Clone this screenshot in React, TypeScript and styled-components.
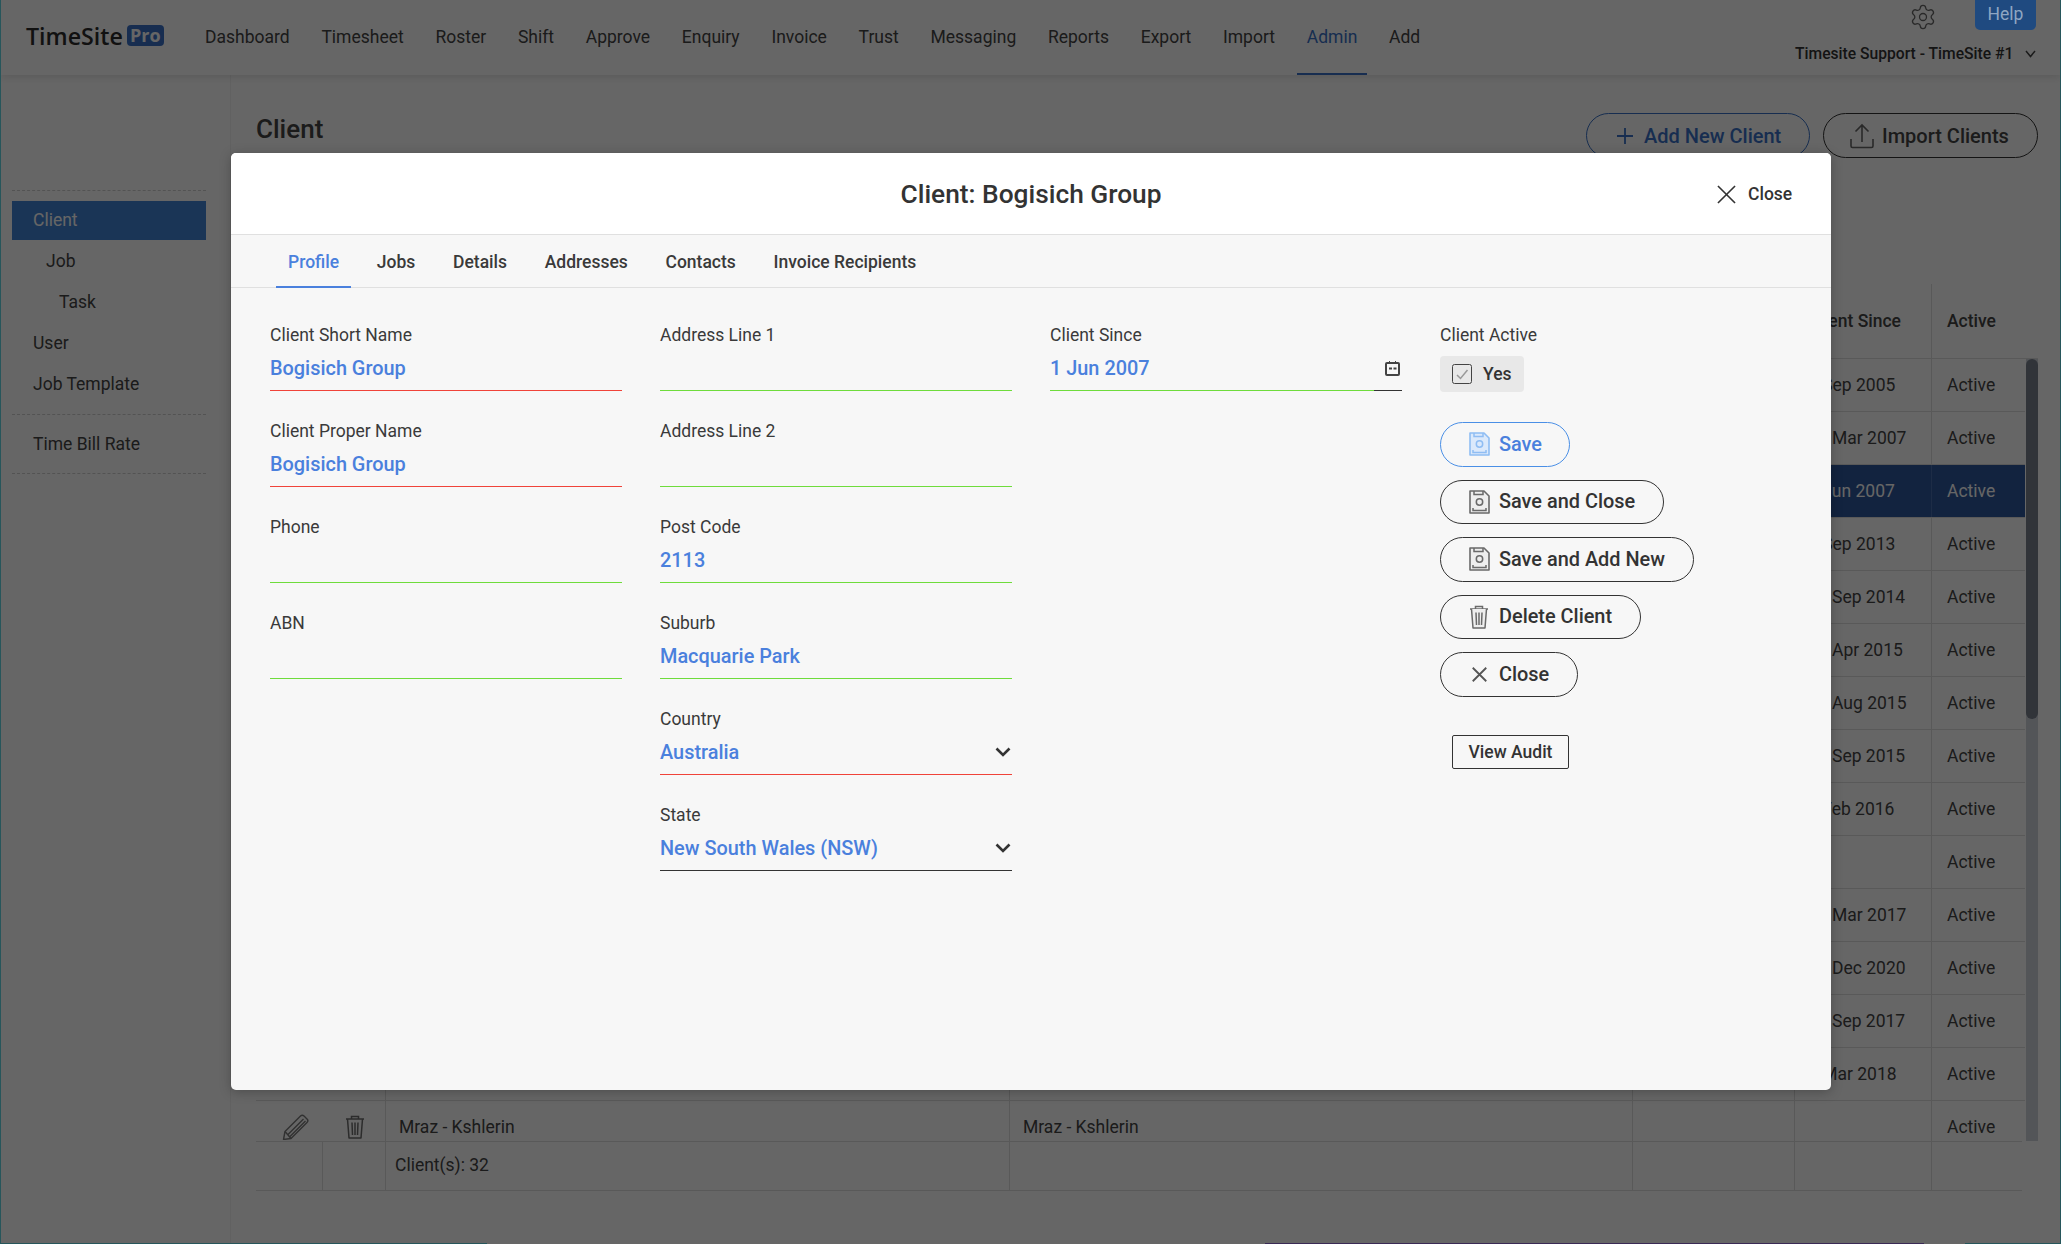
import styled, { createGlobalStyle } from 'styled-components'
import { Settings } from 'lucide-react'

const GlobalStyle = createGlobalStyle`
  html, body {
    margin: 0;
    padding: 0;
    height: 100%;
    overflow: hidden;
    font-family: Roboto, "Liberation Sans", sans-serif;
  }
  * {
    box-sizing: border-box;
  }
`

const Frame = styled.div`
  width: 2061px;
  height: 1244px;
  padding: 0 1px 1px;
  background: linear-gradient(90deg, #27565b 0 487px, #666 487px 1265px, #3a2a55 1265px 1924px, #666 1924px 1965px, #27565b 1965px);
`

const Page = styled.div`
  position: relative;
  height: 100%;
  display: flex;
  flex-direction: column;
  background: #fff;
  color: #444;
  overflow: hidden;
`

const TopBar = styled.header`
  height: 75px;
  flex: none;
  display: flex;
  align-items: stretch;
  padding-left: 25px;
  background: #fff;
  box-shadow: 0 2px 8px rgba(0, 0, 0, 0.12);
  position: relative;
`

const Logo = styled.div`
  display: flex;
  align-items: center;
  height: 71px;
  width: 169px;
  flex: none;
  color: #2c2c2c;
  font: 600 23.2px "Open Sans", sans-serif;
`

const ProBadge = styled.span`
  display: inline-block;
  margin-left: 4px;
  width: 37px;
  height: 21px;
  border-radius: 4px;
  background: #3a72c8;
  color: #fff;
  font: 700 18px/21px "Open Sans", sans-serif;
  text-align: center;
`

const Menu = styled.nav`
  display: flex;
  gap: 11.75px;
`

const MenuItem = styled.a<{ $active?: boolean }>`
  display: flex;
  align-items: center;
  height: 75px;
  padding: 1px 10px 0;
  font-size: 17.5px;
  color: ${p => (p.$active ? '#3a72c8' : '#444')};
  border-bottom: 2px solid ${p => (p.$active ? '#3a72c8' : 'transparent')};
`

const Account = styled.div`
  position: absolute;
  right: 0;
  top: 0;
  height: 75px;
  width: 272px;
`

const GearSlot = styled.span`
  position: absolute;
  left: 121px;
  top: 3px;
  color: #666;
`

const HelpButton = styled.a`
  position: absolute;
  z-index: 1;
  right: 24px;
  top: 0;
  width: 61px;
  height: 30px;
  border-radius: 0 0 5px 5px;
  background: #1f4a80;
  color: #8fa6c2;
  font-size: 17.5px;
  line-height: 28px;
  text-align: center;
`

const AccountName = styled.div`
  position: absolute;
  left: 7px;
  top: 44px;
  display: flex;
  align-items: center;
  gap: 12px;
  color: #333;
  font-size: 15.65px;
  font-weight: 500;
  line-height: 20px;
  white-space: nowrap;
`

const Columns = styled.div`
  flex: 1;
  display: flex;
  min-height: 0;
`

const Sidebar = styled.aside`
  width: 230px;
  flex: none;
  padding: 115px 24px 0 11px;
  border-right: 1px solid #f3f3f3;
`

const SideGroup = styled.div`
  padding: 10px 0;
  border-top: 1px dashed #d0d0d0;
  &:last-child {
    padding-bottom: 9px;
    border-bottom: 1px dashed #d0d0d0;
  }
`

const SideItem = styled.a<{ $active?: boolean; $level?: number }>`
  display: block;
  height: 39px;
  margin-bottom: 2px;
  padding-left: ${p => 21 + (p.$level ?? 0) * 13}px;
  font-size: 17.5px;
  line-height: 39px;
  background: ${p => (p.$active ? '#4285d6' : 'transparent')};
  color: ${p => (p.$active ? '#fff' : '#444')};
  &:last-child {
    margin-bottom: 0;
  }
`

const Main = styled.main`
  flex: 1;
  min-width: 0;
  padding: 0 22px 0 25px;
`

const TitleRow = styled.div`
  height: 209px;
  display: flex;
  align-items: flex-start;
  justify-content: space-between;
  padding-top: 38px;
`

const PageTitle = styled.h1`
  margin: 0;
  font-size: 26px;
  font-weight: 500;
  line-height: 32px;
  color: #444;
`

const TitleActions = styled.div`
  display: flex;
  gap: 13px;
`

const OutlineButton = styled.a<{ $primary?: boolean; $width: number }>`
  display: flex;
  align-items: center;
  gap: ${p => (p.$primary ? 10 : 7)}px;
  width: ${p => p.$width}px;
  height: 45px;
  padding-left: ${p => (p.$primary ? 29 : 25)}px;
  border-radius: 23px;
  border: 1px solid ${p => (p.$primary ? '#3a72c8' : '#333')};
  color: ${p => (p.$primary ? '#3a72c8' : '#444')};
  font-size: 20px;
  font-weight: 500;
`

const Table = styled.div`
  display: flex;
  flex-direction: column;
`

const cols = '67px 63px 624px 623px 162px 137px 1fr'

const HeadRow = styled.div`
  display: grid;
  grid-template-columns: ${cols};
  height: 75px;
  border-bottom: 1px solid #dedede;
`

const Cell = styled.div<{ $head?: boolean }>`
  display: flex;
  align-items: center;
  padding: 0 13px;
  border-right: 1px solid #dedede;
  font-size: 17.5px;
  font-weight: ${p => (p.$head ? 500 : 400)};
  white-space: nowrap;
  &:last-child {
    border-right: none;
    padding-left: 15px;
  }
`

const PencilCell = styled(Cell)`
  justify-content: center;
  padding: 0 0 0 13px;
  border-right: none;
`

const TrashCell = styled(Cell)`
  justify-content: center;
  padding: 0 0 0 2px;
`

const BodyWrap = styled.div`
  display: flex;
  height: 782px;
  overflow: hidden;
`

const Rows = styled.div`
  flex: 1;
  min-width: 0;
`

const Row = styled.div<{ $selected?: boolean }>`
  display: grid;
  grid-template-columns: ${cols};
  height: 53px;
  border-bottom: 1px solid #dedede;
  background: ${p => (p.$selected ? '#2d579d' : 'transparent')};
  color: ${p => (p.$selected ? '#fff' : '#444')};
  ${Cell} {
    border-right-color: ${p => (p.$selected ? '#4a6fae' : '#dedede')};
  }
`

const ScrollTrack = styled.div`
  width: 12px;
  margin-left: 1px;
  flex: none;
  background: #d0d5dd;
`

const ScrollThumb = styled.div`
  width: 12px;
  height: 360px;
  border-radius: 6px;
  background: #7b828f;
`

const FootRow = styled.div`
  display: grid;
  grid-template-columns: ${cols};
  height: 50px;
  width: 1766px;
  border-top: 1px solid #dedede;
  border-bottom: 1px solid #dedede;
`

const FootCell = styled(Cell)`
  padding: 0 9px 2px;
`

const Overlay = styled.div`
  position: absolute;
  inset: 0;
  background: rgba(0, 0, 0, 0.6);
`

const Modal = styled.section`
  position: absolute;
  left: 230px;
  top: 153px;
  width: 1600px;
  height: 937px;
  display: flex;
  flex-direction: column;
  border-radius: 5px;
  background: #f7f7f7;
  box-shadow: 0 2px 12px rgba(0, 0, 0, 0.25);
  color: #333;
  overflow: hidden;
`

const ModalHeader = styled.div`
  position: relative;
  height: 82px;
  flex: none;
  display: flex;
  align-items: center;
  justify-content: center;
  background: #fff;
  border-bottom: 1px solid #e0e0e0;
`

const ModalTitle = styled.h2`
  margin: 0;
  font-size: 26.3px;
  font-weight: 500;
  color: #333;
`

const ModalClose = styled.a`
  position: absolute;
  left: 1486px;
  top: 31px;
  display: flex;
  align-items: center;
  gap: 12px;
  font-size: 17.5px;
  font-weight: 500;
  line-height: 20px;
`

const Tabs = styled.div`
  height: 53px;
  flex: none;
  display: flex;
  gap: 13.7px;
  padding-left: 45px;
  border-bottom: 1px solid #e0e0e0;
`

const Tab = styled.a<{ $active?: boolean }>`
  display: flex;
  align-items: center;
  height: 53px;
  padding: 2px 12px 0;
  font-size: 17.5px;
  font-weight: 500;
  color: ${p => (p.$active ? '#4a80dd' : '#3a3a3a')};
  border-bottom: 2px solid ${p => (p.$active ? '#4a80dd' : 'transparent')};
`

const FormGrid = styled.div`
  display: grid;
  grid-template-columns: 352px 352px 352px 1fr;
  column-gap: 38px;
  padding: 36px 0 0 39px;
`

const FormColumn = styled.div`
  display: flex;
  flex-direction: column;
  gap: 29px;
`

const Field = styled.div`
  height: 67px;
  display: flex;
  flex-direction: column;
`

const FieldLabel = styled.label`
  display: block;
  height: 24px;
  font-size: 17.5px;
  line-height: 23px;
  color: #3a3a3a;
`

const FieldValue = styled.div<{ $line: string }>`
  position: relative;
  height: 43px;
  padding-bottom: 2px;
  border-bottom: 1px solid ${p => p.$line};
  display: flex;
  align-items: center;
  justify-content: space-between;
  font-size: 19.9px;
  font-weight: 500;
  color: #4a80dd;
`

const DateMark = styled.span`
  position: absolute;
  left: 324px;
  right: 0;
  bottom: -1px;
  height: 1px;
  background: #333;
`

const DateIcon = styled.svg`
  position: absolute;
  right: 2px;
  top: 13px;
`

const SelectArrow = styled.svg`
  margin-right: 1px;
`

const ActiveColumn = styled.div`
  display: flex;
  flex-direction: column;
  align-items: flex-start;
`

const ActiveChip = styled.div`
  display: flex;
  align-items: center;
  gap: 11px;
  width: 84px;
  height: 36px;
  margin-top: 8px;
  padding-left: 12px;
  border-radius: 4px;
  background: #e8e8e8;
  font-size: 17.5px;
  font-weight: 500;
`

const ActionList = styled.div`
  display: flex;
  flex-direction: column;
  align-items: flex-start;
  gap: 13px;
  margin-top: 30px;
`

const ActionButton = styled.a<{ $primary?: boolean; $width: number }>`
  display: flex;
  align-items: center;
  width: ${p => p.$width}px;
  height: 44.5px;
  padding-left: 27px;
  gap: 9px;
  border-radius: 23px;
  border: 1px solid ${p => (p.$primary ? '#4a8fe6' : '#333')};
  color: ${p => (p.$primary ? '#4a80dd' : '#333')};
  font-size: 19.9px;
  font-weight: 500;
`

const IconBox = styled.span`
  display: flex;
  justify-content: center;
  width: 22px;
`

const AuditButton = styled.a`
  display: flex;
  align-items: center;
  justify-content: center;
  width: 117px;
  height: 34px;
  margin: 38px 0 0 12px;
  border: 1px solid #333;
  border-radius: 2px;
  font-size: 17.5px;
  font-weight: 500;
`

const SaveIcon = ({ color, fill }: { color: string; fill: string }) => (
  <svg width="22" height="24" viewBox="0 0 22 24" fill="none">
    <path d="M2 1h14l5 5v17H2z" fill={fill} stroke={color} strokeWidth="1.6" strokeLinejoin="round" />
    <path d="M6 1v3.500h9V1" stroke={color} strokeWidth="1.5" />
    <circle cx="11.500" cy="12" r="3.200" stroke={color} strokeWidth="1.5" />
    <path d="M5 18v2.500h13V18" stroke={color} strokeWidth="1.5" />
  </svg>
)

const TrashIcon = ({ color, fill = 'none' }: { color: string; fill?: string }) => (
  <svg width="20" height="24" viewBox="0 0 20 24" fill="none" stroke={color} strokeWidth="1.5">
    <path d="M1 4h18M6.500 4V1.500h7V4" />
    <path d="M2.500 4l1.500 19h12l1.500-19" fill={fill} strokeLinejoin="round" />
    <path d="M7 7.500l.5 12.500M10 7.500V20M13 7.500L12.500 20" />
  </svg>
)

const PencilIcon = () => (
  <svg width="28" height="26" viewBox="0 0 28 26" fill="none" stroke="#7a7a7a" strokeWidth="1.4">
    <path d="M3 17.500L18.500 2c1-1 2.500-1 3.500 0l3 3c1 1 1 2.500 0 3.500L9 24.500 1.500 25.500z" strokeLinejoin="round" />
    <path d="M6 20.500L21.500 5M8 22.500L23.500 7M3 17.500l6 7" />
  </svg>
)

const CrossIcon = ({ size, color, weight }: { size: number; color: string; weight: number }) => (
  <svg width={size} height={size} viewBox="0 0 20 20" fill="none" stroke={color} strokeWidth={weight}>
    <path d="M1 1l18 18M19 1L1 19" />
  </svg>
)

const ChevronIcon = () => (
  <SelectArrow width="16" height="10" viewBox="0 0 16 10" fill="none" stroke="#333" strokeWidth="2.600">
    <path d="M1.500 1.500L8 8l6.500-6.500" />
  </SelectArrow>
)

const menuItems = ['Dashboard', 'Timesheet', 'Roster', 'Shift', 'Approve', 'Enquiry', 'Invoice', 'Trust', 'Messaging', 'Reports', 'Export', 'Import', 'Admin', 'Add']

const tabs = ['Profile', 'Jobs', 'Details', 'Addresses', 'Contacts', 'Invoice Recipients']

const dates = ['1 Sep 2005', '12 Mar 2007', '1 Jun 2007', '1 Sep 2013', '12 Sep 2014', '10 Apr 2015', '10 Aug 2015', '14 Sep 2015', '1 Feb 2016', '', '13 Mar 2017', '14 Dec 2020', '15 Sep 2017', '1 Mar 2018', '']

const green = '#6fdc3c'
const red = '#f0433a'

const fieldsLeft = [
  { label: 'Client Short Name', value: 'Bogisich Group', line: red },
  { label: 'Client Proper Name', value: 'Bogisich Group', line: red },
  { label: 'Phone', value: '', line: green },
  { label: 'ABN', value: '', line: green },
]

const fieldsMiddle = [
  { label: 'Address Line 1', value: '', line: green },
  { label: 'Address Line 2', value: '', line: green },
  { label: 'Post Code', value: '2113', line: green },
  { label: 'Suburb', value: 'Macquarie Park', line: green },
  { label: 'Country', value: 'Australia', line: red, select: true },
  { label: 'State', value: 'New South Wales (NSW)', line: '#333', select: true },
]

const renderField = (f: { label: string; value: string; line: string; select?: boolean }) => (
  <Field key={f.label}>
    <FieldLabel>{f.label}</FieldLabel>
    <FieldValue $line={f.line}>
      {f.value}
      {f.select && <ChevronIcon />}
    </FieldValue>
  </Field>
)

export default function App() {
  return (
    <Frame>
      <GlobalStyle />
      <Page>
        <TopBar>
          <Logo>
            TimeSite<ProBadge>Pro</ProBadge>
          </Logo>
          <Menu>
            {menuItems.map(m => (
              <MenuItem key={m} $active={m === 'Admin'}>{m}</MenuItem>
            ))}
          </Menu>
          <Account>
            <GearSlot><Settings size={28} strokeWidth={1.1} /></GearSlot>
            <HelpButton>Help</HelpButton>
            <AccountName>
              Timesite Support - TimeSite #1
              <svg width="11" height="8" viewBox="0 0 11 8" fill="none" stroke="#444" strokeWidth="1.500">
                <path d="M1 1l4.500 5.500L10 1" />
              </svg>
            </AccountName>
          </Account>
        </TopBar>
        <Columns>
          <Sidebar>
            <SideGroup>
              <SideItem $active>Client</SideItem>
              <SideItem $level={1}>Job</SideItem>
              <SideItem $level={2}>Task</SideItem>
              <SideItem>User</SideItem>
              <SideItem>Job Template</SideItem>
            </SideGroup>
            <SideGroup>
              <SideItem>Time Bill Rate</SideItem>
            </SideGroup>
          </Sidebar>
          <Main>
            <TitleRow>
              <PageTitle>Client</PageTitle>
              <TitleActions>
                <OutlineButton $primary $width={224}>
                  <svg width="18" height="18" viewBox="0 0 18 18" fill="none" stroke="#3a72c8" strokeWidth="1.800">
                    <path d="M9 1v16M1 9h16" />
                  </svg>
                  Add New Client
                </OutlineButton>
                <OutlineButton $width={215}>
                  <svg width="26" height="26" viewBox="0 0 26 26" fill="none" stroke="#666" strokeWidth="1.600">
                    <path d="M13 19V2M6.500 8.500L13 2l6.500 6.500" />
                    <path d="M2 16v7a1.500 1.500 0 0 0 1.500 1.500h19A1.500 1.500 0 0 0 24 23v-7" />
                  </svg>
                  Import Clients
                </OutlineButton>
              </TitleActions>
            </TitleRow>
            <Table>
              <HeadRow>
                <Cell /><Cell /><Cell /><Cell /><Cell />
                <Cell $head>Client Since</Cell>
                <Cell $head>Active</Cell>
              </HeadRow>
              <BodyWrap>
                <Rows>
                  {dates.map((d, i) => (
                    <Row key={i} $selected={i === 2}>
                      <PencilCell><PencilIcon /></PencilCell>
                      <TrashCell><TrashIcon color="#6e6e6e" /></TrashCell>
                      <Cell>{i === 14 ? 'Mraz - Kshlerin' : ''}</Cell>
                      <Cell>{i === 14 ? 'Mraz - Kshlerin' : ''}</Cell>
                      <Cell />
                      <Cell>{d}</Cell>
                      <Cell>Active</Cell>
                    </Row>
                  ))}
                </Rows>
                <ScrollTrack><ScrollThumb /></ScrollTrack>
              </BodyWrap>
              <FootRow>
                <Cell /><Cell />
                <FootCell>Client(s): 32</FootCell>
                <Cell /><Cell /><Cell /><Cell />
              </FootRow>
            </Table>
          </Main>
        </Columns>
        <Overlay />
        <Modal>
          <ModalHeader>
            <ModalTitle>Client: Bogisich Group</ModalTitle>
            <ModalClose>
              <CrossIcon size={19} color="#333" weight={1.7} />
              Close
            </ModalClose>
          </ModalHeader>
          <Tabs>
            {tabs.map(t => (
              <Tab key={t} $active={t === 'Profile'}>{t}</Tab>
            ))}
          </Tabs>
          <FormGrid>
            <FormColumn>{fieldsLeft.map(renderField)}</FormColumn>
            <FormColumn>{fieldsMiddle.map(renderField)}</FormColumn>
            <FormColumn>
              <Field>
                <FieldLabel>Client Since</FieldLabel>
                <FieldValue $line={green}>
                  1 Jun 2007
                  <DateMark />
                  <DateIcon width="15" height="15" viewBox="0 0 15 15" fill="none" stroke="#444">
                    <rect x="1" y="2" width="13" height="12" rx="1" strokeWidth="2" />
                    <path d="M4.500 0v2.500M10.500 0v2.500" strokeWidth="1" />
                    <path d="M4 7.500h3M8.500 7.500h3" strokeWidth="2" />
                  </DateIcon>
                </FieldValue>
              </Field>
            </FormColumn>
            <ActiveColumn>
              <FieldLabel>Client Active</FieldLabel>
              <ActiveChip>
                <svg width="20" height="20" viewBox="0 0 20 20" fill="none">
                  <rect x="0.500" y="0.500" width="19" height="19" rx="2" stroke="#444" />
                  <path d="M5 11l3.500 3.500L15.500 6" stroke="#999" strokeWidth="1.500" />
                </svg>
                Yes
              </ActiveChip>
              <ActionList>
                <ActionButton $primary $width={130}>
                  <IconBox><SaveIcon color="#8fbdf3" fill="#dbe9fb" /></IconBox>Save
                </ActionButton>
                <ActionButton $width={224}>
                  <IconBox><SaveIcon color="#6a6a6a" fill="#eee" /></IconBox>Save and Close
                </ActionButton>
                <ActionButton $width={254}>
                  <IconBox><SaveIcon color="#6a6a6a" fill="#eee" /></IconBox>Save and Add New
                </ActionButton>
                <ActionButton $width={201}>
                  <IconBox><TrashIcon color="#6a6a6a" fill="#eee" /></IconBox>Delete Client
                </ActionButton>
                <ActionButton $width={138}>
                  <IconBox><CrossIcon size={15} color="#555" weight={2.4} /></IconBox>Close
                </ActionButton>
              </ActionList>
              <AuditButton>View Audit</AuditButton>
            </ActiveColumn>
          </FormGrid>
        </Modal>
      </Page>
    </Frame>
  )
}
